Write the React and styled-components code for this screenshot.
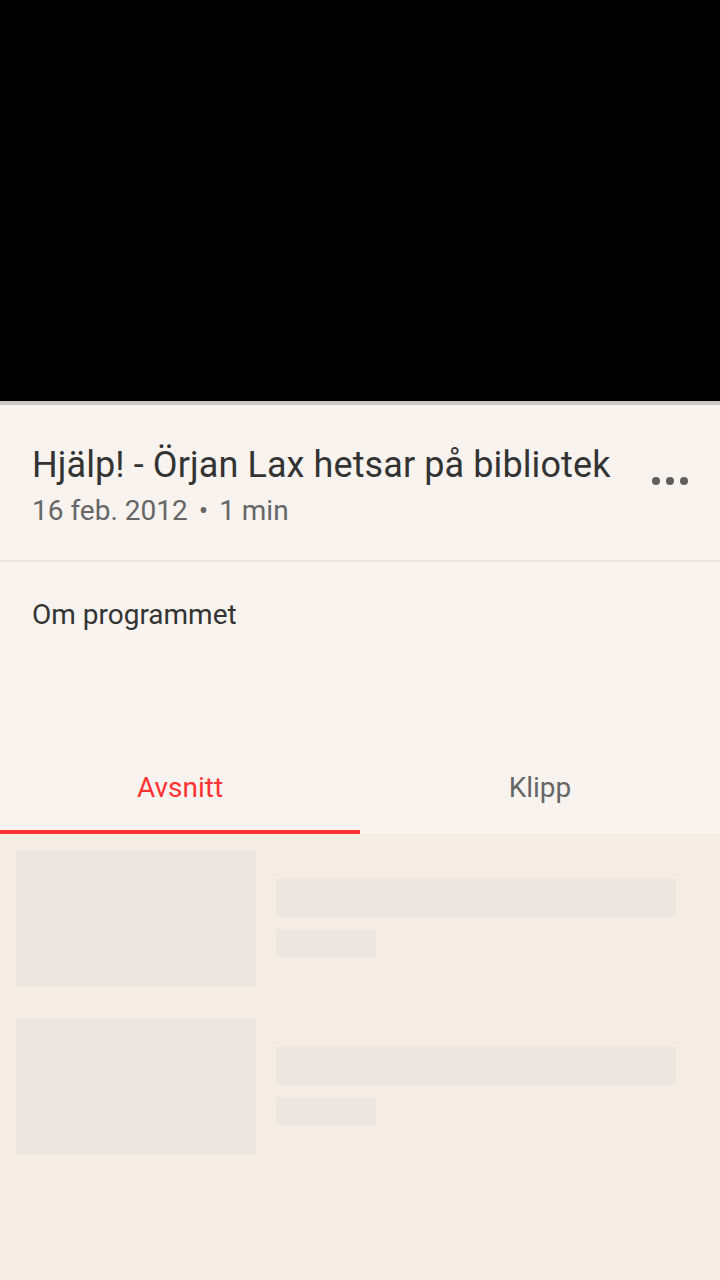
import styled, { createGlobalStyle } from "styled-components";

const GlobalStyle = createGlobalStyle`
  html, body {
    margin: 0;
    padding: 0;
    background: #f5ece3;
    font-family: Roboto, "Noto Sans", sans-serif;
  }
`;

const Page = styled.div`
  width: 720px;
  min-height: 1280px;
  display: flex;
  flex-direction: column;
  background: #f5ece3;
`;

const Video = styled.div`
  height: 401px;
  background: #000;
  border-bottom: 4px solid #c9c9c9;
`;

const Header = styled.div`
  display: flex;
  align-items: center;
  padding: 39px 32px 33px 32px;
  background: #f8f3ee;
  border-bottom: 2px solid #ebe6e0;
`;

const HeaderText = styled.div`
  flex: 1;
  min-width: 0;
  display: flex;
  flex-direction: column;
  gap: 9px;
`;

const Title = styled.h1`
  margin: 0;
  font-size: 36px;
  line-height: 42px;
  font-weight: 400;
  letter-spacing: 0.1px;
  color: #333;
  white-space: nowrap;
`;

const Meta = styled.div`
  font-size: 28px;
  line-height: 32px;
  color: #666;
`;

const Dot = styled.span`
  margin: 0 11px;
`;

const MoreButton = styled.button`
  display: flex;
  gap: 6px;
  padding: 0;
  margin-bottom: 9px;
  border: none;
  background: none;
`;

const MoreDot = styled.span`
  width: 8px;
  height: 8px;
  border-radius: 50%;
  background: #5e5e5e;
`;

const About = styled.div`
  height: 176px;
  box-sizing: border-box;
  padding: 37px 32px 0;
  background: #f8f3ee;
  font-size: 28px;
  line-height: 32px;
  color: #333;
`;

const Tabs = styled.div`
  display: grid;
  grid-template-columns: 1fr 1fr;
  background: #f8f3ee;
`;

const Tab = styled.div`
  padding: 34px 0 26px;
  text-align: center;
  font-size: 28px;
  line-height: 32px;
  color: ${(p) => (p.$active ? "#ff3333" : "#666")};
  border-bottom: 4px solid ${(p) => (p.$active ? "#ff3333" : "transparent")};
`;

const List = styled.div`
  display: flex;
  flex-direction: column;
`;

const Row = styled.div`
  display: flex;
  align-items: center;
  gap: 20px;
  padding: 16px 44px 16px 16px;
`;

const Thumb = styled.div`
  width: 240px;
  height: 136px;
  flex-shrink: 0;
  background: #ede5df;
`;

const Lines = styled.div`
  flex: 1;
  display: flex;
  flex-direction: column;
  gap: 12px;
`;

const Bar = styled.div`
  height: ${(p) => p.$h}px;
  width: ${(p) => p.$w};
  background: #ede5df;
`;

const SkeletonRow = () => (
  <Row>
    <Thumb />
    <Lines>
      <Bar $h={38} $w="100%" />
      <Bar $h={28} $w="100px" />
    </Lines>
  </Row>
);

export default function App() {
  return (
    <Page>
      <GlobalStyle />
      <Video />
      <Header>
        <HeaderText>
          <Title>Hjälp! - Örjan Lax hetsar på bibliotek</Title>
          <Meta>
            16 feb. 2012<Dot>•</Dot>1 min
          </Meta>
        </HeaderText>
        <MoreButton aria-label="Mer">
          <MoreDot />
          <MoreDot />
          <MoreDot />
        </MoreButton>
      </Header>
      <About>Om programmet</About>
      <Tabs>
        <Tab $active>Avsnitt</Tab>
        <Tab>Klipp</Tab>
      </Tabs>
      <List>
        <SkeletonRow />
        <SkeletonRow />
      </List>
    </Page>
  );
}
